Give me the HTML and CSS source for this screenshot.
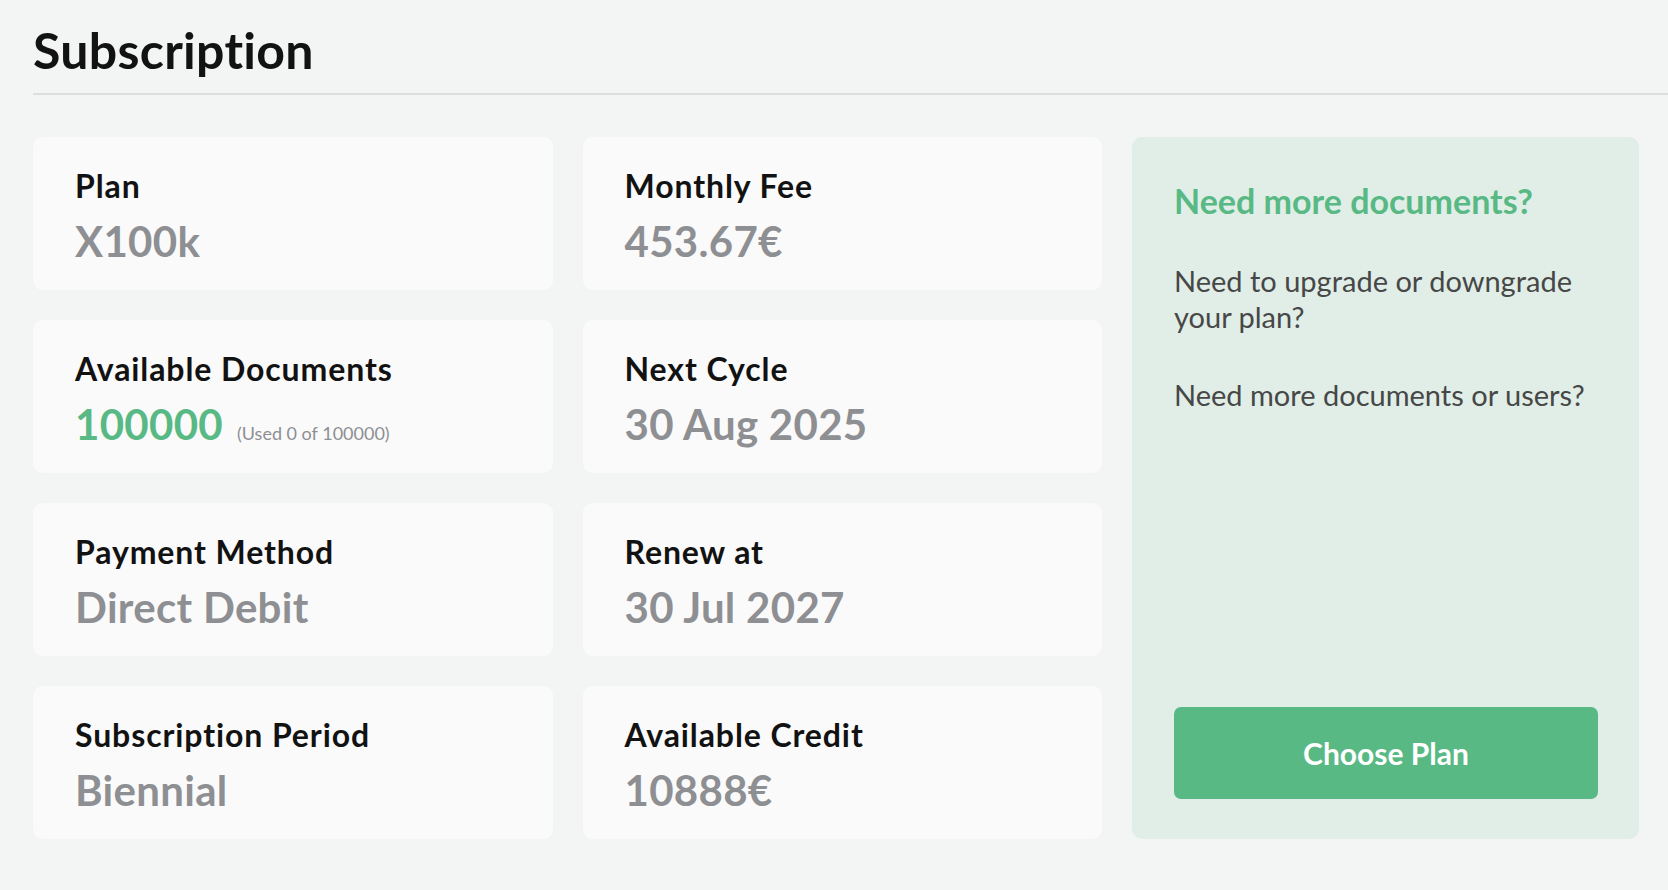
FILE: index.html
```html
<!DOCTYPE html>
<html lang="en">
<head>
<meta charset="utf-8">
<title>Subscription</title>
<link rel="stylesheet" href="styles.css">
</head>
<body>
<div class="page">
  <header class="page-header">
    <h1 class="page-title">Subscription</h1>
  </header>
  <main class="layout">
    <section class="card">
      <div class="card-label">Plan</div>
      <div class="card-value">X100k</div>
    </section>
    <section class="card">
      <div class="card-label">Monthly Fee</div>
      <div class="card-value">453.67€</div>
    </section>
    <aside class="promo">
      <h2 class="promo-title">Need more documents?</h2>
      <p class="promo-text">Need to upgrade or downgrade your plan?</p>
      <p class="promo-text">Need more documents or users?</p>
      <button class="promo-button" type="button">Choose Plan</button>
    </aside>
    <section class="card">
      <div class="card-label">Available Documents</div>
      <div class="card-value"><span class="value-green">100000</span><span class="value-note">(Used 0 of 100000)</span></div>
    </section>
    <section class="card">
      <div class="card-label">Next Cycle</div>
      <div class="card-value">30 Aug 2025</div>
    </section>
    <section class="card">
      <div class="card-label">Payment Method</div>
      <div class="card-value">Direct Debit</div>
    </section>
    <section class="card">
      <div class="card-label">Renew at</div>
      <div class="card-value">30 Jul 2027</div>
    </section>
    <section class="card">
      <div class="card-label">Subscription Period</div>
      <div class="card-value">Biennial</div>
    </section>
    <section class="card">
      <div class="card-label">Available Credit</div>
      <div class="card-value">10888€</div>
    </section>
  </main>
</div>
</body>
</html>
```

FILE: styles.css
```css
* {
  box-sizing: border-box;
}

html, body {
  margin: 0;
  padding: 0;
  background: #f3f5f4;
}

body {
  font-family: "Lato", "Open Sans", sans-serif;
  color: #121212;
}

.page {
  padding-left: 33px;
}

.page-header {
  height: 95px;
  border-bottom: 2px solid #dcdfde;
  padding-top: 20px;
}

.page-title {
  margin: 0;
  font-size: 50px;
  line-height: 60px;
  font-weight: 700;
  letter-spacing: 0.3px;
  color: #121212;
}

.layout {
  margin-top: 42px;
  margin-right: 29px;
  display: grid;
  grid-template-columns: 1fr 1fr 507px;
  grid-template-rows: repeat(4, 153px);
  column-gap: 30px;
  row-gap: 30px;
}

.card {
  background: #fafafa;
  border-radius: 10px;
  padding: 30px 42px 0;
}

.card-label {
  font-size: 32px;
  line-height: 38px;
  font-weight: 700;
  letter-spacing: 0.9px;
  color: #121212;
}

.card-value {
  margin-top: 11px;
  font-size: 42px;
  line-height: 50px;
  font-weight: 700;
  letter-spacing: 0.3px;
  color: #8e8f93;
  display: flex;
  align-items: baseline;
}

.value-green {
  color: #58b984;
}

.value-note {
  margin-left: 14px;
  font-size: 18px;
  font-weight: 400;
  letter-spacing: 0;
  color: #8e8f93;
}

.promo {
  grid-column: 3;
  grid-row: 1 / span 4;
  background: #e0eee7;
  border-radius: 10px;
  padding: 44px 41px 40px 42px;
  display: flex;
  flex-direction: column;
}

.promo-title {
  margin: 0 0 42px;
  font-size: 34px;
  line-height: 40px;
  font-weight: 700;
  color: #58b984;
}

.promo-text {
  margin: 0 0 42px;
  font-size: 29px;
  line-height: 36px;
  font-weight: 400;
  color: #474747;
}

.promo-button {
  margin-top: auto;
  height: 92px;
  width: 100%;
  border: none;
  border-radius: 7px;
  background: #58b984;
  color: #ffffff;
  font-family: "Lato", "Open Sans", sans-serif;
  font-size: 30px;
  font-weight: 700;
  cursor: pointer;
}
```
